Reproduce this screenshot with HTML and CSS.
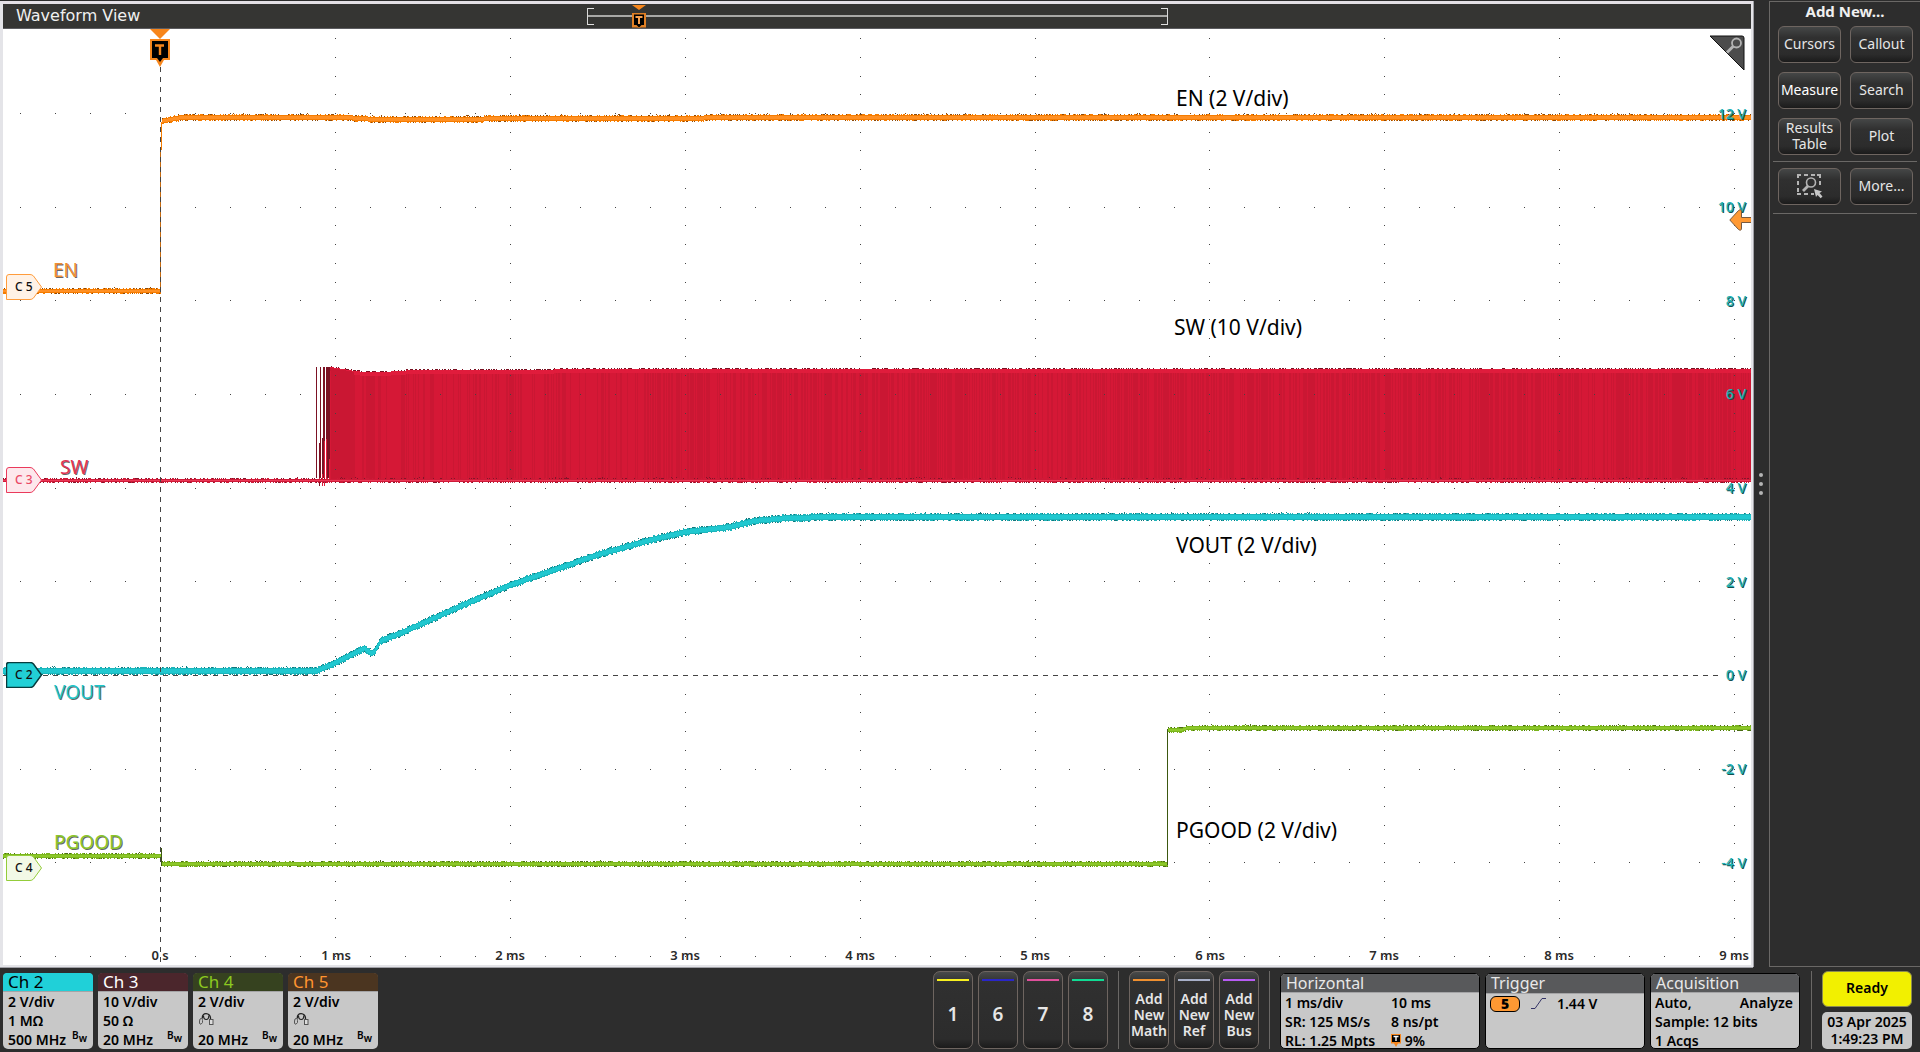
FILE: index.html
```html
<!DOCTYPE html>
<html lang="en">
<head>
<meta charset="utf-8">
<title>Waveform View</title>
<link rel="stylesheet" href="styles.css">
</head>
<body>
<div class="workspace">
  <main class="wave-panel">
    <header class="wave-header">
      <h1 class="wave-title">Waveform View</h1>
      <div class="overview">
        <div class="overview-marker">
          <svg width="14" height="24" viewBox="0 0 14 24" aria-hidden="true"><path d="M0 1h14l-7 5z" fill="#f7861c"/><path d="M0 9h14v14.500H9L7 24l-2-.500H0z" fill="#e07f24"/><path d="M2 10.500h10v10.500H9.500L7 23.500 4.500 21H2z" fill="#000"/><path d="M3.500 13h7M7 13v7" stroke="#f7a050" stroke-width="2"/></svg>
        </div>
      </div>
    </header>
    <section class="plot" aria-label="Oscilloscope traces">
      <svg class="traces" id="traces" viewBox="0 0 1748 936" preserveAspectRatio="none" aria-hidden="true"></svg>

      <svg class="trigger-flag" width="20" height="38" viewBox="0 0 20 38" aria-hidden="true"><path d="M0 0h20L10 10z" fill="#f7861c"/><path d="M0 10h20v21h-6l-4 7-4-7H0z" fill="#f7861c"/><path d="M2 12h16v17h-5l-3 4-3-4H2z" fill="#000"/><path d="M5 16.500h9M10 16v10" stroke="#f7861c" stroke-width="2.400"/></svg>

      <span class="name en" style="--x:50;--y:241">EN</span>
      <span class="name sw" style="--x:57;--y:438">SW</span>
      <span class="name vout" style="--x:51;--y:663">VOUT</span>
      <span class="name pgood" style="--x:51;--y:813">PGOOD</span>

      <span class="note" style="--x:1173;--y:69">EN (2 V/div)</span>
      <span class="note" style="--x:1171;--y:298">SW (10 V/div)</span>
      <span class="note" style="--x:1173;--y:516">VOUT (2 V/div)</span>
      <span class="note" style="--x:1173;--y:801">PGOOD (2 V/div)</span>

      <span class="volt" style="--y:85">12 V</span>
      <span class="volt" style="--y:178">10 V</span>
      <span class="volt" style="--y:272">8 V</span>
      <span class="volt" style="--y:365">6 V</span>
      <span class="volt" style="--y:459">4 V</span>
      <span class="volt" style="--y:553">2 V</span>
      <span class="volt" style="--y:646">0 V</span>
      <span class="volt" style="--y:740">-2 V</span>
      <span class="volt" style="--y:834">-4 V</span>

      <span class="time" style="--x:157">0 s</span>
      <span class="time" style="--x:333">1 ms</span>
      <span class="time" style="--x:507">2 ms</span>
      <span class="time" style="--x:682">3 ms</span>
      <span class="time" style="--x:857">4 ms</span>
      <span class="time" style="--x:1032">5 ms</span>
      <span class="time" style="--x:1207">6 ms</span>
      <span class="time" style="--x:1381">7 ms</span>
      <span class="time" style="--x:1556">8 ms</span>
      <span class="time" style="--x:1731">9 ms</span>

      <button class="handle h5" style="--y:258"><svg viewBox="0 0 36 26" aria-hidden="true"><path d="M3 .500h21q2 0 3.500 1.500L35.500 13 27.500 24q-1.500 1.500-3.500 1.500H.500V3q0-2.500 2.500-2.500z"/></svg><span>C 5</span></button>
      <button class="handle h3" style="--y:451"><svg viewBox="0 0 36 26" aria-hidden="true"><path d="M3 .500h21q2 0 3.500 1.500L35.500 13 27.500 24q-1.500 1.500-3.500 1.500H.500V3q0-2.500 2.500-2.500z"/></svg><span>C 3</span></button>
      <button class="handle h2" style="--y:646"><svg viewBox="0 0 36 26" aria-hidden="true"><path d="M3 .500h21q2 0 3.500 1.500L35.500 13 27.500 24q-1.500 1.500-3.500 1.500H.500V3q0-2.500 2.500-2.500z"/></svg><span>C 2</span></button>
      <button class="handle h4" style="--y:839"><svg viewBox="0 0 36 26" aria-hidden="true"><path d="M3 .500h21q2 0 3.500 1.500L35.500 13 27.500 24q-1.500 1.500-3.500 1.500H.500V3q0-2.500 2.500-2.500z"/></svg><span>C 4</span></button>

      <svg class="level-arrow" width="22" height="22" viewBox="0 0 22 22" aria-hidden="true"><path d="M.800 11 9.500 1.500q3-2 3 1.500v5.500H23v5H12.500V19q0 3.500-3 1.500z" fill="#ff9933" stroke="#775a40"/></svg>

      <button class="zoom-corner" aria-label="Zoom"><svg width="36" height="36" viewBox="0 0 36 36" aria-hidden="true"><path d="M1 1h32q2 0 2 2v32z" fill="#4c4c4c" stroke="#111"/><circle cx="27.500" cy="8" r="4.500" fill="none" stroke="#b4b4b4" stroke-width="1.800"/><path d="M24.500 11 18 17.500" stroke="#b4b4b4" stroke-width="3"/></svg></button>
    </section>
  </main>
  <div class="splitter"><i></i><i></i><i></i></div>
  <aside class="sidebar">
    <h2 class="side-title">Add New...</h2>
    <div class="side-grid">
      <button class="btn">Cursors</button><button class="btn">Callout</button>
      <button class="btn bright">Measure</button><button class="btn">Search</button>
      <button class="btn">Results Table</button><button class="btn">Plot</button>
    </div>
    <div class="side-grid framed">
      <button class="btn" aria-label="Draw a box"><svg width="28" height="26" viewBox="0 0 28 26" aria-hidden="true"><path d="M2 5V2h3M8 2h4M15 2h4M21 2h3v3M24 8v4M2 8v4M2 15v4M2 20v1h3M8 21h4M15 21h3" fill="none" stroke="#b4b4b4" stroke-width="2"/><circle cx="15" cy="9.500" r="4.500" fill="none" stroke="#b4b4b4" stroke-width="1.600"/><path d="M12 13 7 18" stroke="#b4b4b4" stroke-width="2.800"/><path d="M18 16l8 2.500-2.500 1.500 3 3.500-1.800 1.700-3.200-3.200-1.500 2z" fill="#c8c8c8"/></svg></button>
      <button class="btn">More...</button>
    </div>
  </aside>
</div>

<footer class="settings">
  <div class="channels">
    <button class="badge c2"><span class="badge-head">Ch 2</span><span class="badge-body"><span>2 V/div</span><span>1 MΩ</span><span>500 MHz</span></span><span class="bw">B<sub>w</sub></span></button>
    <button class="badge c3"><span class="badge-head">Ch 3</span><span class="badge-body"><span>10 V/div</span><span>50 Ω</span><span>20 MHz</span></span><span class="bw">B<sub>w</sub></span></button>
    <button class="badge c4"><span class="badge-head">Ch 4</span><span class="badge-body"><span>2 V/div</span><span><svg class="probe" width="16" height="14" viewBox="0 0 16 14" aria-hidden="true"><path d="M4.500 6.500C3 0 13 0 12.500 7" fill="none" stroke="#222" stroke-width="1.300"/><path d="M2 7q2.500-1.500 2.500 1.500v2q-1.500 3-3 1v-2.500z" fill="none" stroke="#555"/><path d="M5.500 3.500q0 4 2.700 4t2.600-4" fill="none" stroke="#222" stroke-width="1.200"/><rect x="11.500" y="7.500" width="3.500" height="5" fill="#ddd" stroke="#555"/></svg></span><span>20 MHz</span></span><span class="bw">B<sub>w</sub></span></button>
    <button class="badge c5"><span class="badge-head">Ch 5</span><span class="badge-body"><span>2 V/div</span><span><svg class="probe" width="16" height="14" viewBox="0 0 16 14" aria-hidden="true"><path d="M4.500 6.500C3 0 13 0 12.500 7" fill="none" stroke="#222" stroke-width="1.300"/><path d="M2 7q2.500-1.500 2.500 1.500v2q-1.500 3-3 1v-2.500z" fill="none" stroke="#555"/><path d="M5.500 3.500q0 4 2.700 4t2.600-4" fill="none" stroke="#222" stroke-width="1.200"/><rect x="11.500" y="7.500" width="3.500" height="5" fill="#ddd" stroke="#555"/></svg></span><span>20 MHz</span></span><span class="bw">B<sub>w</sub></span></button>
  </div>
  <div class="keys">
    <button class="key yellow">1</button><button class="key blue">6</button><button class="key pink">7</button><button class="key green">8</button>
  </div>
  <div class="keys ruled">
    <button class="key add orange">Add New Math</button><button class="key add silver">Add New Ref</button><button class="key add violet">Add New Bus</button>
  </div>
  <div class="panels">
    <button class="badge panel horizontal"><span class="badge-head">Horizontal</span><span class="badge-body pair"><span>1 ms/div</span><span>10 ms</span><span>SR: 125 MS/s</span><span>8 ns/pt</span><span>RL: 1.25 Mpts</span><span><svg width="10" height="13" viewBox="0 0 10 13" aria-hidden="true"><path d="M0 0h10v9.500H7L5 13 3 9.500H0z" fill="#f7861c"/><path d="M1 1h8v7H1z" fill="#000"/><path d="M2.500 2.500h5M5 2v5" stroke="#fff" stroke-width="1.400"/></svg> 9%</span></span></button>
    <button class="badge panel trigger"><span class="badge-head">Trigger</span><span class="badge-body"><span class="trigger-row"><b class="source">5</b><svg width="17" height="13" viewBox="0 0 17 13" aria-hidden="true"><path d="M1 11.500h4L12 1.500h4" fill="none" stroke="#333366"/></svg><span>1.44 V</span></span></span></button>
    <button class="badge panel acquisition"><span class="badge-head">Acquisition</span><span class="badge-body"><span class="spread"><span>Auto,</span><span>Analyze</span></span><span>Sample: 12 bits</span><span>1 Acqs</span></span></button>
  </div>
  <div class="status">
    <button class="ready">Ready</button>
    <div class="clock"><span>03 Apr 2025</span><span>1:49:23 PM</span></div>
  </div>
</footer>
<script src="traces.js"></script>
</body>
</html>
```
FILE: styles.css
```css
* { box-sizing: border-box; }
body {
  margin: 0;
  min-height: 100vh;
  display: flex;
  flex-direction: column;
  background: #2d2d2d;
  color: #e6e6e6;
  font-family: "Noto Sans", "Open Sans", sans-serif;
  font-size: 15px;
}
button { font: inherit; color: inherit; margin: 0; padding: 0; border: 0; background: none; text-align: left; }
h1, h2 { margin: 0; }

.workspace { flex: 1; display: flex; min-height: 600px; padding-top: 1px; }
.wave-panel {
  flex: 1;
  min-width: 0;
  display: flex;
  flex-direction: column;
  border: 3px solid #e4e4e8;
  border-top-color: #e4e0e6;
  border-right-width: 2px;
  border-bottom-width: 2px;
  box-shadow: 0 1px 0 #a0a0a6, 1px 0 0 #a0a0a6;
}
.wave-header {
  height: 25px;
  display: grid;
  grid-template-columns: 584fr 581fr 583fr;
  align-items: center;
  background: #353533;
  border-bottom: 1px solid #5c5c60;
}
.wave-title {
  padding-left: 13px;
  font: 400 16px/24px "DejaVu Sans", sans-serif;
  color: #f0f0f0;
}
.overview {
  position: relative;
  height: 17px;
  border: 1px solid #d8d8d8;
  border-width: 0 1px;
  background:
    linear-gradient(#e0e0e0, #e0e0e0) 0 0 / 6px 1px no-repeat,
    linear-gradient(#e0e0e0, #e0e0e0) 0 100% / 6px 1px no-repeat,
    linear-gradient(#e0e0e0, #e0e0e0) 100% 0 / 6px 1px no-repeat,
    linear-gradient(#e0e0e0, #e0e0e0) 100% 100% / 6px 1px no-repeat,
    linear-gradient(#a8a8a6, #a8a8a6) 0 50% / 100% 2px no-repeat;
}
.overview-marker { position: absolute; left: calc(51 / 581 * 100% - 7px); top: -4px; }
.overview-marker svg { display: block; }

.plot { position: relative; flex: 1; overflow: hidden; background: #fff; color: #000; line-height: 1; }
.traces { position: absolute; inset: 0; width: 100%; height: 100%; }
.trigger-flag { position: absolute; top: 0; left: calc(157 / 1748 * 100% - 10px); }
.name, .note, .volt, .time { position: absolute; white-space: nowrap; transform: translateY(-50%); }
.name, .note { left: calc(var(--x) / 1748 * 100%); top: calc(var(--y) / 936 * 100%); font-size: 21px; line-height: 24px; }
.name { font-size: 19px; text-shadow: 1px 1px 0 rgba(0, 0, 0, .6); }
.en { color: #ef8f35; }
.sw { color: #e23353; }
.vout { color: #1fc6cb; }
.pgood { color: #8bc62a; }
.volt { right: 5px; top: calc(var(--y) / 936 * 100%); font-size: 14px; font-weight: 500; color: #1fb2b5; text-shadow: 1px 1px 0 #134f50; }
.time { left: calc(var(--x) / 1748 * 100%); bottom: 2px; font-size: 13px; line-height: 16px; font-weight: 600; color: #2a2a2a; transform: translateX(-50%); }

.handle {
  position: absolute;
  left: 3px;
  top: calc(var(--y) / 936 * 100%);
  width: 36px;
  height: 26px;
  transform: translateY(-50%);
  padding-left: 9px;
  padding-bottom: 1px;
  font-size: 12px;
  font-weight: 500;
  color: #111;
}
.handle svg { position: absolute; inset: 0; }
.handle span { position: relative; }
.h5 path { fill: #fff2e6; stroke: #ff9c3c; }
.h3 path { fill: #fde8ec; stroke: #ea3a5c; }
.h3 { color: #ea4a66; }
.h2 path { fill: #22d0d6; stroke: #063c3e; stroke-width: 1.5; }
.h4 path { fill: #f2f9e6; stroke: #93cc3a; }
.level-arrow { position: absolute; right: 0; top: calc(191 / 936 * 100% - 11px); }
.zoom-corner { position: absolute; top: 6px; right: 6px; }
.zoom-corner svg { display: block; }

.splitter { width: 16px; display: flex; flex-direction: column; justify-content: center; align-items: center; gap: 5px; }
.splitter i { width: 4px; height: 4px; border-radius: 2px; background: #b4b4b4; }

.sidebar { width: 151px; border: 1px solid #6a6866; border-right: 0; padding: 0 3px; }
.side-title { text-align: center; font-size: 15px; line-height: 18px; font-weight: 700; color: #f0f0f0; }
.side-grid { display: grid; grid-template-columns: 63px 63px; column-gap: 9px; row-gap: 9px; padding: 6px 5px; }
.side-grid.framed { border: 1px solid #6a6866; border-width: 1px 0; padding: 6px 5px 8px; }
.btn {
  height: 37px;
  border: 1px solid #6e6560;
  border-radius: 6px;
  background: linear-gradient(#454747, #303030 30%, #2c2c2c 78%, #1b1b1b);
  text-align: center;
  font-size: 14px;
  line-height: 16px;
  padding-bottom: 2px;
  white-space: normal;
}
.btn.bright { color: #fff; }
.btn svg { display: block; margin: 0 auto; }

.settings { display: flex; gap: 5px; padding: 4px 8px 3px 3px; min-height: 85px; }
.channels { display: flex; gap: 5px; margin-right: auto; padding-top: 2px; }
.badge {
  position: relative;
  width: 90px;
  height: 76px;
  display: flex;
  flex-direction: column;
  border-radius: 5px;
  background: #c8c8c8;
  color: #000;
  font-weight: 600;
  font-size: 14px;
  line-height: 19px;
}
.badge-head { height: 20px; padding-left: 5px; border-bottom: 1px solid #a4a4a6; border-radius: 4px 4px 0 0; font-size: 17px; line-height: 18px; font-weight: 400; }
.badge-body { display: flex; flex-direction: column; padding: 0 5px; white-space: nowrap; }
.c2 .badge-head { background: #20d0d8; color: #000; }
.c3 .badge-head { background: #4b262c; color: #fff; }
.c4 .badge-head { background: #36421f; color: #8cc820; }
.c5 .badge-head { background: #4b3520; color: #ff9430; }
.probe { display: block; margin: 1px 0 4px; }
.bw { position: absolute; right: 6px; bottom: 6px; font-size: 10px; line-height: 14px; }
.bw sub { font-size: 10px; line-height: 1; }

.keys { display: flex; gap: 5px; padding-right: 5px; }
.keys.ruled { border: 1px solid #6a6866; border-width: 0 1px; padding: 0 10px; margin-right: 5px; }
.key {
  width: 40px;
  height: 78px;
  display: flex;
  flex-direction: column;
  align-items: center;
  border: 1px solid #6e6560;
  border-radius: 7px;
  padding-top: 7px;
  background: linear-gradient(#484a4a, #303030 14%, #2c2c2c 88%, #1b1b1b);
  text-align: center;
  font-size: 19px;
  font-weight: 600;
  line-height: 20px;
}
.key::before { content: ""; width: 32px; height: 2px; margin-bottom: 23px; flex: none; background: var(--c); }
.add { font-size: 14px; line-height: 16px; white-space: normal; }
.add::before { margin-bottom: 10px; }
.yellow { --c: #f8f020; }
.blue { --c: #2a26c8; }
.pink { --c: #e0509c; }
.green { --c: #10dc94; }
.orange { --c: #f09030; }
.silver { --c: #a8b0c8; }
.violet { --c: #b85cf4; }

.panels { display: flex; gap: 5px; padding-top: 2px; }
.panel { border: 1px solid #000; }
.panel .badge-head { background: #58595b; color: #e8e8e8; font-size: 16px; }
.panel .badge-body { padding: 0 6px 0 4px; }
.horizontal { width: 200px; }
.trigger { width: 160px; }
.acquisition { width: 150px; }
.badge-body.pair { display: grid; grid-template-columns: 106px 1fr; }
.pair svg { vertical-align: -1px; }
.trigger-row { display: flex; align-items: center; gap: 10px; }
.source { width: 30px; height: 16px; border: 1px solid #000; border-radius: 6px; background: #ff9933; text-align: center; line-height: 14px; }
.spread { display: flex; justify-content: space-between; }

.status { display: flex; flex-direction: column; gap: 5px; border-left: 1px solid #6a6866; margin-left: 6px; padding-left: 10px; }
.ready { width: 90px; height: 36px; border: 1px solid #8c8c50; border-radius: 6px; background: #f2f000; color: #000; text-align: center; font-size: 14px; font-weight: 600; padding-bottom: 3px; }
.clock { width: 90px; height: 37px; border-radius: 5px; background: #c8c8c8; color: #000; display: flex; flex-direction: column; align-items: center; font-size: 14px; font-weight: 600; line-height: 17px; padding-top: 1px; white-space: nowrap; }
```
FILE: traces.js
```js
const svg = document.getElementById('traces');
const NS = 'http://www.w3.org/2000/svg';
const W = 1748, H = 936;

let seed = 7;
const rand = () => (seed = (seed * 16807) % 2147483647) / 2147483647;

function path(d, attrs) {
  const p = document.createElementNS(NS, 'path');
  p.setAttribute('d', d);
  p.setAttribute('shape-rendering', 'crispEdges');
  for (const k in attrs) p.setAttribute(k, attrs[k]);
  svg.appendChild(p);
}

function levelAt(pts, x) {
  for (let i = 1; i < pts.length; i++) {
    if (x <= pts[i][0]) {
      const [x0, y0] = pts[i - 1], [x1, y1] = pts[i];
      return y0 + (y1 - y0) * (x - x0) / (x1 - x0 || 1);
    }
  }
  return pts[pts.length - 1][1];
}

const bar = (x, y, h) => `M${x} ${y}h1v${h}h-1z`;

// A trace is one solid column per pixel, with noise on both edges.
function trace(pts, thick, colors) {
  let core = '', edge = '', dark = '', mid = '';
  for (let x = pts[0][0]; x < pts[pts.length - 1][0]; x++) {
    const top = Math.round(levelAt(pts, x) - thick / 2);
    edge += bar(x, top, thick);
    core += bar(x, top + 1, thick - 2);
    for (const y of [top - 1, top + thick]) {
      const r = rand();
      if (r < 0.2) dark += bar(x, y, 1);
      else if (r < 0.45) mid += bar(x, y, 1);
    }
    if (rand() < 0.02) dark += bar(x, top - 2, 1);
  }
  path(edge, { fill: colors[1] });
  path(mid, { fill: colors[1] });
  path(core, { fill: colors[0] });
  path(dark, { fill: colors[2] });
}

// Switch node burst
const swTop = [[325, 338], [328, 338], [345, 341], [360, 343], [380, 343], [410, 341], [480, 341], [620, 340], [W, 340]];
let body = '', lit = '', cap = '', rough = '';
for (let x = 327; x < W; x++) {
  const y = Math.round(levelAt(swTop, x));
  body += bar(x, y, 113 + 340 - y);
  cap += bar(x, y, x > 350 ? 4 : 1);
  const dense = x < 352 || (x > 362 && x < 372) ? 0.05 : x < 640 ? 0.75 : 0.45;
  if (rand() < dense) lit += bar(x, y + 4, 449 - y);
  if (rand() < 0.45) rough += bar(x, y - 1, 1);
}
path(body, { fill: '#ca1733' });
path(lit, { fill: '#d51836' });
path(cap, { fill: '#e01c3c' });
path(rough, { fill: '#7a1022' });
path('M313 338h1v111h-1zM317 338h1v111h-1zM316 414h1v43h-1zM320 338h2v111h-2zM319 409h1v38h-1zM323 338h4v111h-4z', { fill: '#7c1224' });
path('M321 412h1v45h-1zM323 410h1v44h-1zM326 430h1v22h-1zM319 445h1v12h-1z', { fill: '#e01c3c' });
trace([[0, 451], [W, 451]], 3, ['#ea3856', '#cf1a38', '#84142a']);

// Graticule dots
let dots = '';
for (let v = 0; v < 10; v++) {
  const y = Math.round(84 + v * 93.67);
  for (let t = -4; t <= 45; t++) {
    const x = Math.round(157 + t * 34.98);
    if (t !== 0 && v !== 6) dots += bar(x, y, 1);
  }
}
for (let t = 1; t < 10; t++) {
  const x = Math.round(157 + t * 174.9);
  for (let k = -4; k <= 45; k++) dots += bar(x, Math.round(84 + k * 18.73), 1);
}
path(dots, { fill: '#444' });
path(`M0 646.500H${W - 30}`, { stroke: '#444', 'stroke-dasharray': '5 5', fill: 'none' });

trace([[0, 642], [313, 642], [332, 634], [361, 619], [367, 624], [371, 623], [377, 612], [400, 603], [462, 575], [507, 556],
  [585, 529], [597, 525], [647, 511], [682, 503], [727, 498], [750, 492], [784, 489], [830, 488], [W, 488]], 6, ['#20c8d0', '#1cb4ba', '#13767a']);

trace([[0, 262], [158, 262]], 4, ['#ff9024', '#f57c00', '#8a4808']);
trace([[159, 92], [175, 89], [210, 88], [335, 88], [365, 90], [480, 90], [700, 89], [W, 88]], 5, ['#ff9024', '#f57c00', '#8a4808']);
path('M158 93h1v28h-1z', { fill: '#f57c00' });
path('M157 120h1v144h-1z', { fill: '#c46a10' });

trace([[0, 827], [158, 827]], 4, ['#8cc828', '#7ab41c', '#4a6c14']);
trace([[158, 835], [1165, 835]], 4, ['#8cc828', '#7ab41c', '#4a6c14']);
trace([[1165, 701], [1178, 701], [1184, 699], [W, 699]], 4, ['#8cc828', '#7ab41c', '#4a6c14']);
path('M158 819h1v18h-1zM1164 700h1v136h-1z', { fill: '#3c5810' });

// Trigger position
path(`M157.500 38V${H}`, { stroke: '#444', 'stroke-dasharray': '5 5', fill: 'none' });
```
